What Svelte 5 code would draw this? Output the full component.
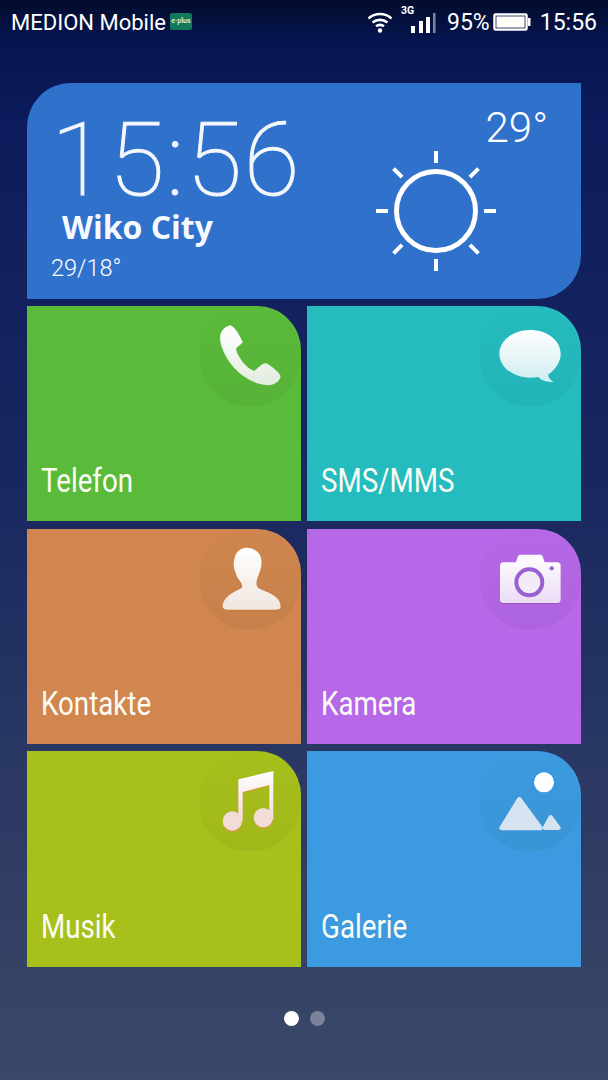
<script>
  const tiles = [
    { name: 'Telefon', color: 'green', icon: 'phone', low: '#e2ece0' },
    { name: 'SMS/MMS', color: 'teal', icon: 'sms', low: '#cfeef0' },
    { name: 'Kontakte', color: 'orange', icon: 'person', low: '#f0e6de' },
    { name: 'Kamera', color: 'purple', icon: 'camera', low: '#ecdcf6' },
    { name: 'Musik', color: 'lime', icon: 'music', low: '#f3d9d6' },
    { name: 'Galerie', color: 'blue', icon: 'gallery', low: '#cbdcee' }
  ];
  const rays = [0, 45, 90, 135, 180, 225, 270, 315];
</script>

<div class="screen">
  <header class="status">
    <div class="left">
      <span>MEDION Mobile</span>
      <span class="badge">e·plus</span>
    </div>
    <div class="right">
      <svg class="wifi" width="26" height="22" viewBox="0 0 26 22" fill="none" stroke="#fff" stroke-width="2.6">
        <path d="M1.5 7.500C8 1.500 18 1.500 24.500 7.500" />
        <path d="M5.500 11.500C10 8 16 8 20.500 11.500" />
        <path d="M9 15.300C11.500 13.500 14.500 13.500 17 15.300" />
        <circle cx="13" cy="19.500" r="2.200" fill="#fff" stroke="none" />
      </svg>
      <div class="signal">
        <span class="three-g">3G</span>
        <svg width="26" height="20" viewBox="0 0 26 20">
          <rect x="1" y="13" width="4" height="7" fill="#fff" />
          <rect x="9" y="8" width="4" height="12" fill="#fff" />
          <rect x="16" y="4" width="4" height="16" fill="#fff" />
          <rect x="23" y="0" width="2.500" height="20" fill="#7c8699" />
        </svg>
      </div>
      <span class="pct">95%</span>
      <svg class="battery" width="38" height="18" viewBox="0 0 38 18">
        <rect x="1" y="1" width="33" height="16" rx="1.500" fill="#fff" stroke="#fff" stroke-width="1.500" />
        <rect x="3" y="3" width="29" height="12" fill="#fffdf5" stroke="#10204f" stroke-width=".8" />
        <rect x="35" y="5" width="2.500" height="8" fill="#fff" />
      </svg>
      <span class="time">15:56</span>
    </div>
  </header>

  <main class="board">
    <section class="weather">
      <div class="info">
        <div class="clock">15:56</div>
        <div class="city">Wiko City</div>
        <div class="range">29/18°</div>
      </div>
      <div class="now">
        <div class="temp">29°</div>
        <svg class="sun" width="124" height="124" viewBox="-62 -62 124 124" stroke="#fff" fill="none">
          <circle r="39.500" stroke-width="5" />
          {#each rays as a}
            <line x1="0" y1="-48" x2="0" y2="-60" stroke-width="4" transform="rotate({a})" />
          {/each}
        </svg>
      </div>
    </section>

    <div class="grid">
      {#each tiles as t}
        <article class="tile {t.color}">
          <svg class="glyph" width="102" height="100" viewBox="0 0 102 100">
            <defs>
              <linearGradient id="g-{t.icon}" x1="0" y1="0" x2="0" y2="1">
                <stop offset="0" stop-color="#ffffff" />
                <stop offset="1" stop-color={t.low} />
              </linearGradient>
              <linearGradient id="c-{t.icon}" x1="0" y1="0" x2="0" y2="1">
                <stop offset="0" stop-color="#000" stop-opacity=".005" />
                <stop offset="1" stop-color="#000" stop-opacity=".045" />
              </linearGradient>
            </defs>
            <circle cx="51" cy="50" r="51" fill="url(#c-{t.icon})" />
            <g transform="translate(-9 -6) scale(.33333)">
              {#if t.icon === 'phone'}
                <path fill="url(#g-phone)" d="M120 76C135 78 150 110 158 125C158 132 138 140 138 148C145 175 170 205 192 213C200 210 215 188 228 190C240 195 265 215 272 228C270 245 250 258 230 255C170 250 115 200 95 140C85 110 90 85 120 76Z" />
              {:else if t.icon === 'sms'}
                <path fill="url(#g-sms)" d="M180 90C231 90 272 121 272 161C272 196 240 222 235 222C233 230 240 240 251 245C235 248 215 242 205 231C197 232 188 233 180 233C130 233 88 201 88 161C88 121 130 90 180 90Z" />
              {:else if t.icon === 'person'}
                <path fill="#c67f42" transform="translate(0 4)" d="M165 75C185 72 212 85 214 110C216 125 212 140 208 150C200 170 195 185 205 195C225 207 270 215 272 250C272 258 265 260 258 260L110 260C100 260 96 252 98 245C105 215 140 205 155 195C160 185 150 175 143 165C132 140 128 125 133 110C135 90 150 75 165 75Z" />
                <path fill="url(#g-person)" d="M165 75C185 72 212 85 214 110C216 125 212 140 208 150C200 170 195 185 205 195C225 207 270 215 272 250C272 258 265 260 258 260L110 260C100 260 96 252 98 245C105 215 140 205 155 195C160 185 150 175 143 165C132 140 128 125 133 110C135 90 150 75 165 75Z" />
              {:else if t.icon === 'camera'}
                <path fill="#9a59c9" transform="translate(0 4)" d="M150 95H212C218 95 220 105 224 118H262C268 118 272 122 272 128V230C272 236 268 240 262 240H100C94 240 90 236 90 230V128C90 122 94 118 100 118H138C142 105 144 95 150 95Z" />
                <path fill="url(#g-camera)" d="M150 95H212C218 95 220 105 224 118H262C268 118 272 122 272 128V230C272 236 268 240 262 240H100C94 240 90 236 90 230V128C90 122 94 118 100 118H138C142 105 144 95 150 95Z" />
                <circle cx="178" cy="178" r="39" fill="#f3ecf8" stroke="#9a5fd0" stroke-width="12" />
                <circle cx="245" cy="136" r="6.500" fill="#9a5fd0" />
              {:else if t.icon === 'music'}
                <g fill="#d39a3c" transform="translate(0 4)">
                  <path d="M145 103L250 78V225H238V120L158 141V228H145Z" />
                  <circle cx="127" cy="228" r="29" />
                  <circle cx="220" cy="218" r="29" />
                </g>
                <path fill="url(#g-music)" d="M145 103L250 78V225H238V120L158 141V228H145Z" />
                <circle cx="127" cy="228" r="29" fill="#f2dcd8" />
                <circle cx="220" cy="218" r="29" fill="#f2dcd8" />
              {:else}
                <circle cx="222" cy="112" r="30" fill="#fdfeff" />
                <path fill="#d6e3f0" stroke="#d6e3f0" stroke-width="14" stroke-linejoin="round" d="M148 163L211 249H95Z" />
                <path fill="#d6e3f0" stroke="#d6e3f0" stroke-width="12" stroke-linejoin="round" d="M242 216L266 249H224L236 226Z" />
              {/if}
            </g>
          </svg>
          <span class="label">{t.name}</span>
        </article>
      {/each}
    </div>
  </main>

  <nav class="dots">
    <i class="on"></i>
    <i></i>
  </nav>
</div>

<style>
  :global(body) {
    margin: 0;
    background: #14215c;
  }

  .screen {
    width: 608px;
    height: 1080px;
    overflow: hidden;
    display: flex;
    flex-direction: column;
    color: #fff;
    font-family: Roboto, "Liberation Sans", sans-serif;
    background: linear-gradient(180deg, #020c2c 0, #06154f 40px, #0c1c5c 120px, #1a2860 500px, #2c3a64 800px, #3a4867 1080px);
  }

  .status {
    height: 45px;
    padding: 0 11px;
    display: flex;
    align-items: center;
    justify-content: space-between;
    box-sizing: border-box;
  }

  .left,
  .right {
    display: flex;
    align-items: center;
  }

  .left {
    font-size: 22px;
  }

  .right {
    font-size: 23px;
  }

  .status span {
    line-height: 45px;
  }

  .status .badge {
    width: 22px;
    height: 17px;
    margin-left: 4px;
    margin-top: -2px;
    border-radius: 2px;
    background: #12795a;
    color: #cfeee2;
    font-size: 7px;
    font-weight: 700;
    line-height: 17px;
    text-align: center;
    white-space: nowrap;
  }

  .wifi {
    margin-right: 17px;
    margin-top: -2px;
  }

  .signal {
    position: relative;
    width: 26px;
    height: 20px;
    margin-right: 11px;
    margin-top: -2px;
  }

  .signal .three-g {
    position: absolute;
    left: -9px;
    top: -6px;
    font-size: 10.500px;
    font-weight: 700;
    line-height: 10px;
  }

  .pct {
    margin-right: 3px;
  }

  .battery {
    margin-right: 9px;
    margin-top: -1px;
  }

  .board {
    padding: 38px 27px 0;
    display: flex;
    flex-direction: column;
    gap: 7px;
  }

  .weather {
    height: 216px;
    display: flex;
    justify-content: space-between;
    background: #3071cc;
    border-radius: 44px 0 44px 0;
  }

  .info {
    padding-left: 24px;
    display: flex;
    flex-direction: column;
  }

  .clock {
    height: 100px;
    margin-top: 27px;
    font-size: 102px;
    font-weight: 100;
    line-height: 100px;
    letter-spacing: 1.800px;
    -webkit-text-stroke: 1px #f4f8fc;
    color: #f4f8fc;
  }

  .city {
    height: 34px;
    margin-left: 11px;
    font-family: "Open Sans", sans-serif;
    font-size: 32px;
    font-weight: 700;
    line-height: 34px;
    color: #f6f9fd;
  }

  .range {
    margin-top: 11px;
    font-size: 23.500px;
    font-weight: 300;
    line-height: 26px;
  }

  .now {
    width: 220px;
    position: relative;
    display: flex;
    flex-direction: column;
    align-items: flex-start;
  }

  .temp {
    margin-top: 23px;
    align-self: flex-end;
    margin-right: 33px;
    font-size: 42px;
    font-weight: 300;
    line-height: 44px;
  }

  .sun {
    position: absolute;
    left: 13px;
    top: 66px;
  }

  .grid {
    display: grid;
    grid-template-columns: 274px 274px;
    grid-template-rows: 215px 215px 216px;
    column-gap: 6px;
    row-gap: 7.600px;
  }

  .tile {
    position: relative;
    overflow: hidden;
    border-top-right-radius: 44px;
  }

  .glyph {
    position: absolute;
    top: 0;
    right: 0;
  }

  .label {
    position: absolute;
    left: 14px;
    bottom: 21px;
    font-size: 33px;
    line-height: 38px;
    white-space: nowrap;
    transform: scaleX(.84);
    transform-origin: left center;
    color: #fbfdf5;
  }

  .green { background: #5abb3a; }
  .teal { background: #25bcc0; }
  .orange { background: #d0864e; }
  .purple { background: #b668e8; }
  .lime { background: #a7c01b; }
  .blue { background: #3c9be0; }

  .dots {
    display: flex;
    justify-content: center;
    gap: 11px;
    margin-top: 44px;
  }

  .dots i {
    width: 15px;
    height: 15px;
    border-radius: 50%;
    background: #7c8299;
  }

  .dots i.on {
    background: #fff;
  }
</style>
